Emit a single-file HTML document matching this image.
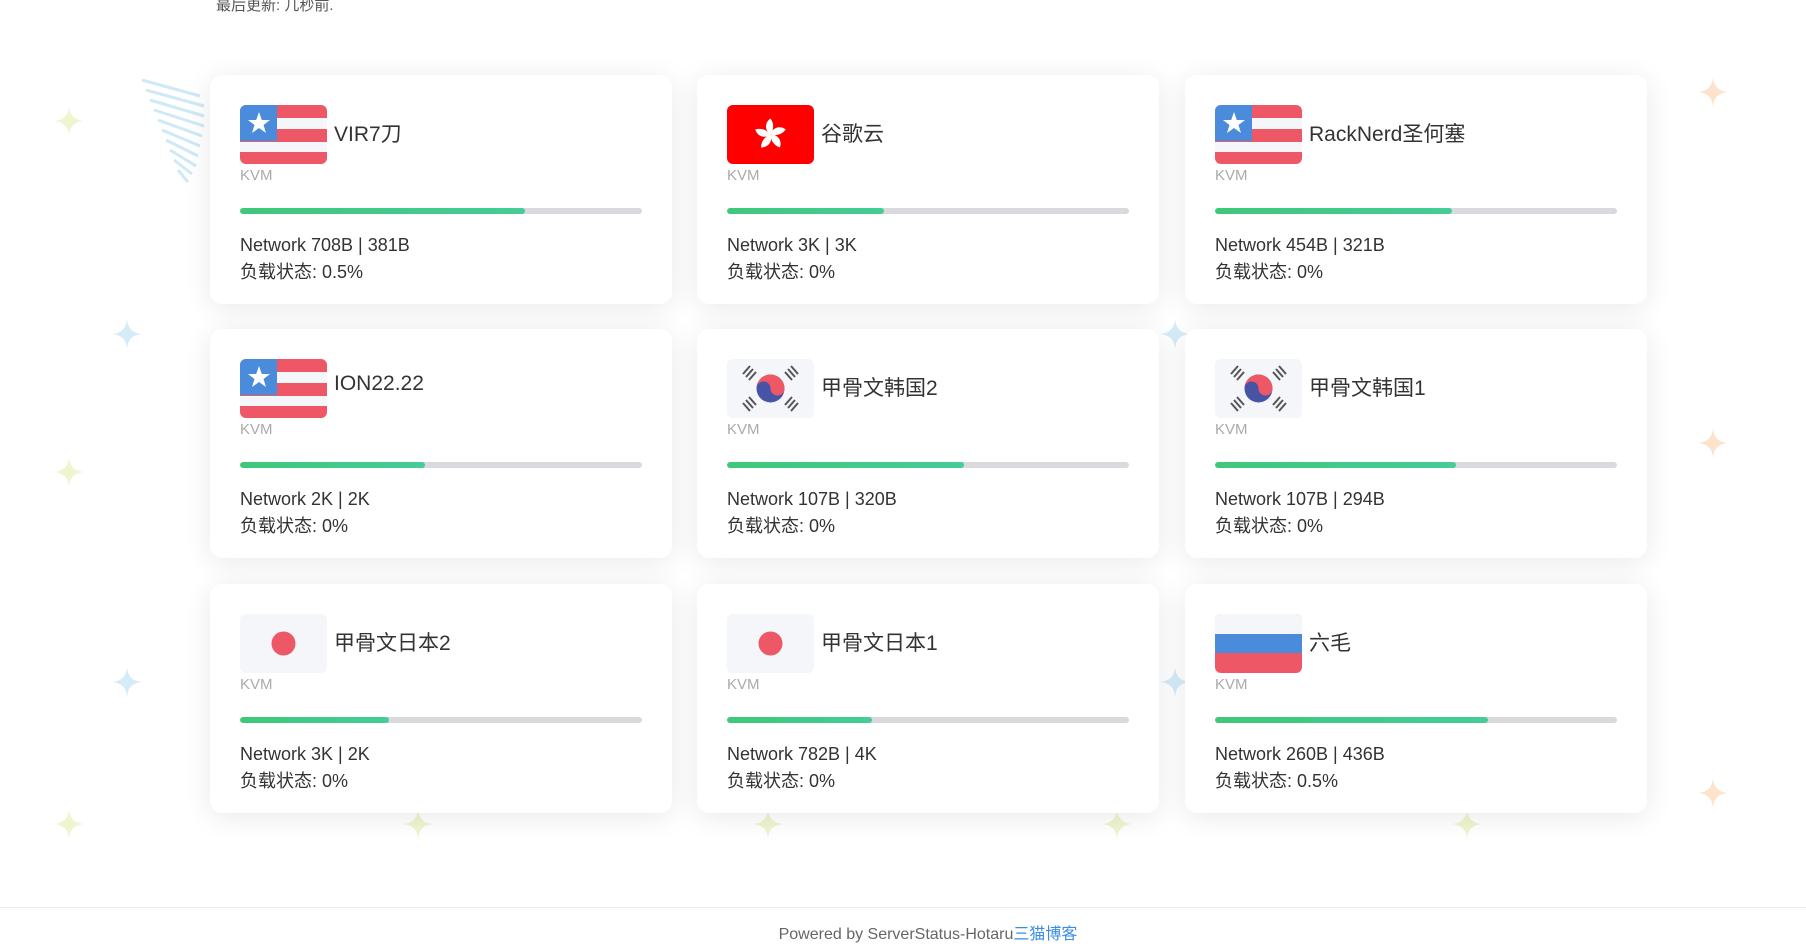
<!DOCTYPE html>
<html><head><meta charset="utf-8"><style>
body{margin:0;width:1806px;height:949px;overflow:hidden;background:#fff;font-family:"Liberation Sans","Noto Sans CJK SC",sans-serif;position:relative;color:#333}
.top{position:absolute;left:216px;top:-6px;font-size:15px;color:#555}
.card{position:absolute;width:462px;height:229px;background:#fff;border-radius:12px;box-shadow:0 4px 28px rgba(0,0,0,0.09)}
.flag{position:absolute;left:30px;top:30px;width:87px;height:59px;border-radius:6px;overflow:hidden}
.name{position:absolute;left:124px;top:43px;font-size:21px;color:#333}
.kvm{position:absolute;left:30px;top:92px;font-size:15px;color:#aaa}
.bar{position:absolute;left:30px;top:133px;width:402px;height:6px;border-radius:3px;background:#d8dadd;overflow:hidden}
.bar i{display:block;height:6px;border-radius:3px;background:linear-gradient(90deg,#3fc77a,#45cc98)}
.t1{position:absolute;left:30px;top:160px;font-size:18px;color:#333}
.t2{position:absolute;left:30px;top:183px;font-size:18px;color:#333}
.foot{position:absolute;left:0;top:907px;width:1806px;border-top:1px solid #ebebeb;text-align:center;font-size:16px;color:#666;padding-top:12px;box-sizing:border-box;padding-left:50px}
.foot a{color:#3a8ee6;text-decoration:none}
.sp{position:absolute;width:30px;height:30px}
</style></head><body>
<svg width="0" height="0" style="position:absolute"><defs>
<symbol id="us" viewBox="0 0 87 59"><rect width="87" height="59" fill="#ee5766"/><rect y="13" width="87" height="11" fill="#f5f6fa"/><rect y="37" width="87" height="10" fill="#f5f6fa"/><rect width="37" height="36" fill="#4a8bdc"/><polygon points="19,7 21.8,15 30,15 23.5,20 26,28 19,23 12,28 14.5,20 8,15 16.2,15" fill="#fff"/></symbol>
<symbol id="kr" viewBox="0 0 87 59"><rect width="87" height="59" fill="#f5f6fa"/><circle cx="43.5" cy="29.5" r="14" fill="#4754a5"/><path d="M29.5 29.5a14 14 0 0 1 28 0a7 7 0 0 1-14 0a7 7 0 0 0-14 0z" fill="#ee5766"/><g stroke="#555" stroke-width="2"><path d="M16 15l7-8M19 18l7-8M22 21l7-8M16 44l7 8M19 41l7 8M22 38l7 8M71 15l-7-8M68 18l-7-8M65 21l-7-8M71 44l-7 8M68 41l-7 8M65 38l-7 8"/></g></symbol>
<symbol id="jp" viewBox="0 0 87 59"><rect width="87" height="59" fill="#f5f6fa"/><circle cx="43.5" cy="29.5" r="12" fill="#ee5766"/></symbol>
<symbol id="ru" viewBox="0 0 87 59"><rect width="87" height="59" fill="#ee5766"/><rect width="87" height="20" fill="#f5f6fa"/><rect y="20" width="87" height="19" fill="#4a8bdc"/></symbol>
<symbol id="hk" viewBox="0 0 87 59"><rect width="87" height="59" fill="#f00"/><g fill="#fff" transform="translate(43.5,29.5)"><path id="pt" d="M0 0C-6-4-6-12 0-16C3-12 4-6 0 0z"/><use href="#pt" transform="rotate(72)"/><use href="#pt" transform="rotate(144)"/><use href="#pt" transform="rotate(216)"/><use href="#pt" transform="rotate(288)"/></g></symbol>
<symbol id="st" viewBox="0 0 30 30"><path d="M15 0Q16 14 30 15Q16 16 15 30Q14 16 0 15Q14 14 15 0z"/></symbol>
</defs></svg>
<svg class="sp" style="left:54px;top:106px" fill="#eef5cf"><use href="#st"/></svg>
<svg class="sp" style="left:112px;top:319px" fill="#d6ebf8"><use href="#st"/></svg>
<svg class="sp" style="left:54px;top:457px" fill="#eef5cf"><use href="#st"/></svg>
<svg class="sp" style="left:112px;top:667px" fill="#d6ebf8"><use href="#st"/></svg>
<svg class="sp" style="left:54px;top:809px" fill="#eef5cf"><use href="#st"/></svg>
<svg class="sp" style="left:1698px;top:77px" fill="#fde3cc"><use href="#st"/></svg>
<svg class="sp" style="left:1698px;top:428px" fill="#fde3cc"><use href="#st"/></svg>
<svg class="sp" style="left:1698px;top:778px" fill="#fde3cc"><use href="#st"/></svg>
<svg class="sp" style="left:1160px;top:319px" fill="#d6ebf8"><use href="#st"/></svg>
<svg class="sp" style="left:1160px;top:667px" fill="#d6ebf8"><use href="#st"/></svg>
<svg class="sp" style="left:403px;top:809px" fill="#eef5cf"><use href="#st"/></svg>
<svg class="sp" style="left:753px;top:809px" fill="#eef5cf"><use href="#st"/></svg>
<svg class="sp" style="left:1102px;top:809px" fill="#eef5cf"><use href="#st"/></svg>
<svg class="sp" style="left:1452px;top:809px" fill="#eef5cf"><use href="#st"/></svg>
<svg style="position:absolute;left:140px;top:78px" width="70" height="110"><g stroke="#cfe9f6" stroke-width="3"><path d="M2 2L60 18M6 12L64 28M10 22L64 38M14 32L64 48M18 42L62 58M22 52L60 68M26 62L58 78M30 72L56 88M34 82L52 96M38 92L48 104"/></g></svg>
<div class="top">最后更新: 几秒前.</div>

<div class="card" style="left:210px;top:75px"><svg class="flag"><use href="#us"/></svg><div class="name">VIR7刀</div><div class="kvm">KVM</div><div class="bar"><i style="width:71%"></i></div><div class="t1">Network 708B | 381B</div><div class="t2">负载状态: 0.5%</div></div>
<div class="card" style="left:697px;top:75px"><svg class="flag"><use href="#hk"/></svg><div class="name">谷歌云</div><div class="kvm">KVM</div><div class="bar"><i style="width:39%"></i></div><div class="t1">Network 3K | 3K</div><div class="t2">负载状态: 0%</div></div>
<div class="card" style="left:1185px;top:75px"><svg class="flag"><use href="#us"/></svg><div class="name">RackNerd圣何塞</div><div class="kvm">KVM</div><div class="bar"><i style="width:59%"></i></div><div class="t1">Network 454B | 321B</div><div class="t2">负载状态: 0%</div></div>

<div class="card" style="left:210px;top:329px"><svg class="flag"><use href="#us"/></svg><div class="name">ION22.22</div><div class="kvm">KVM</div><div class="bar"><i style="width:46%"></i></div><div class="t1">Network 2K | 2K</div><div class="t2">负载状态: 0%</div></div>
<div class="card" style="left:697px;top:329px"><svg class="flag"><use href="#kr"/></svg><div class="name">甲骨文韩国2</div><div class="kvm">KVM</div><div class="bar"><i style="width:59%"></i></div><div class="t1">Network 107B | 320B</div><div class="t2">负载状态: 0%</div></div>
<div class="card" style="left:1185px;top:329px"><svg class="flag"><use href="#kr"/></svg><div class="name">甲骨文韩国1</div><div class="kvm">KVM</div><div class="bar"><i style="width:60%"></i></div><div class="t1">Network 107B | 294B</div><div class="t2">负载状态: 0%</div></div>

<div class="card" style="left:210px;top:584px"><svg class="flag"><use href="#jp"/></svg><div class="name">甲骨文日本2</div><div class="kvm">KVM</div><div class="bar"><i style="width:37%"></i></div><div class="t1">Network 3K | 2K</div><div class="t2">负载状态: 0%</div></div>
<div class="card" style="left:697px;top:584px"><svg class="flag"><use href="#jp"/></svg><div class="name">甲骨文日本1</div><div class="kvm">KVM</div><div class="bar"><i style="width:36%"></i></div><div class="t1">Network 782B | 4K</div><div class="t2">负载状态: 0%</div></div>
<div class="card" style="left:1185px;top:584px"><svg class="flag"><use href="#ru"/></svg><div class="name">六毛</div><div class="kvm">KVM</div><div class="bar"><i style="width:68%"></i></div><div class="t1">Network 260B | 436B</div><div class="t2">负载状态: 0.5%</div></div>

<div class="foot">Powered by ServerStatus-Hotaru<a>三猫博客</a></div>
</body></html>
